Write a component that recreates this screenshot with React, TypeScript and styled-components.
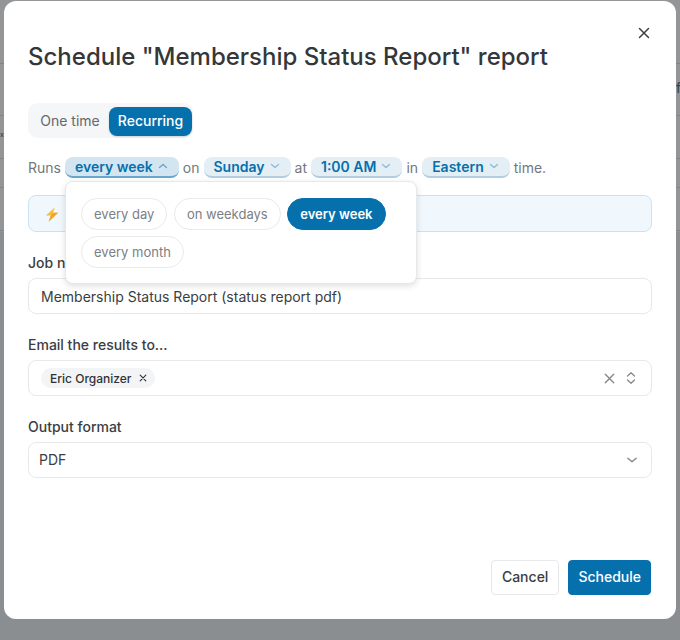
import React from 'react';
import styled, { createGlobalStyle } from 'styled-components';

const GlobalStyle = createGlobalStyle`
  html, body {
    margin: 0;
    padding: 0;
    height: 640px;
    overflow: hidden;
    background: #8a8e91;
    font-family: Inter, "Liberation Sans", sans-serif;
  }
  * { box-sizing: border-box; }
`;

// the page under the modal only shows as faint table rows down both edges
const rowLine = (y: number) =>
  `linear-gradient(#808487, #808487) 0 ${y}px / 100% 1px no-repeat`;

const Backdrop = styled.div`
  height: 640px;
  padding: 1px 4px 21px;
  position: relative;
  overflow: hidden;
  background:
    ${rowLine(63)}, ${rowLine(115)}, ${rowLine(158)}, ${rowLine(187)}, ${rowLine(230)},
    linear-gradient(#939597, #939597) 0 0 / 100% 232px no-repeat,
    #8a8e91;
`;

const PageGlyph = styled.span<{ $left: number; $top: number; $size: number }>`
  position: absolute;
  left: ${p => p.$left}px;
  top: ${p => p.$top}px;
  font-size: ${p => p.$size}px;
  line-height: 16px;
  font-weight: 500;
  color: #3f4448;
`;

const Dialog = styled.div`
  height: 618px;
  background: #fff;
  border-radius: 12px;
  padding: 0 24px 24px;
  display: flex;
  flex-direction: column;
  position: relative;
`;

const Title = styled.h1`
  margin: 39px 0 0;
  height: 34px;
  font-size: 24px;
  line-height: 34px;
  font-weight: 500;
  color: #34373a;
`;

const CloseButton = styled.button`
  position: absolute;
  top: 24px;
  right: 24px;
  width: 16px;
  height: 16px;
  padding: 0;
  border: 0;
  background: none;
  color: #3c4043;
  display: flex;
`;

const Tabs = styled.div`
  margin-top: 29px;
  align-self: flex-start;
  display: flex;
  align-items: center;
  height: 35px;
  width: 165px;
  padding: 2px 1px 0 3px;
  background: #f5f6f7;
  border-radius: 10px;
`;

const Tab = styled.div<{ $active?: boolean }>`
  height: 29px;
  padding-bottom: 2px;
  flex: ${p => (p.$active ? '0 0 83px' : '1')};
  display: flex;
  align-items: center;
  justify-content: center;
  border-radius: 8px;
  font-size: 14px;
  font-weight: ${p => (p.$active ? 500 : 400)};
  color: ${p => (p.$active ? '#fff' : '#63686c')};
  background: ${p => (p.$active ? '#0670ad' : 'transparent')};
  box-shadow: ${p => (p.$active ? '0 1px 2px rgba(0,0,0,.15)' : 'none')};
`;

const RunsRow = styled.div`
  margin-top: 18px;
  height: 22px;
  display: flex;
  align-items: center;
  gap: 4px;
  font-size: 14px;
  color: #73787c;
  position: relative;
`;

const Pill = styled.span<{ $open?: boolean }>`
  height: 21px;
  display: inline-flex;
  align-items: center;
  gap: 4px;
  padding: 0 10px;
  border-radius: 8px;
  font-size: 14px;
  font-weight: 600;
  color: #0670ad;
  background: ${p => (p.$open ? '#d2e5f0' : '#e3eef5')};
  border-bottom: 2px solid ${p => (p.$open ? '#6ba7cb' : '#b0d0e2')};
  svg { color: ${p => (p.$open ? '#6ba3c6' : '#8fbbd6')}; }
`;

const Popover = styled.div`
  position: absolute;
  top: 25px;
  left: 37px;
  width: 352px;
  height: 103px;
  z-index: 2;
  background: #fff;
  border: 1px solid #e6e8ea;
  border-radius: 8px;
  box-shadow: 0 2px 6px rgba(0, 0, 0, .13);
  padding: 16px 15px 0;
  display: flex;
  flex-wrap: wrap;
  align-content: flex-start;
  gap: 6px 6.5px;
`;

const Chip = styled.span<{ $selected?: boolean }>`
  height: 32px;
  display: inline-flex;
  align-items: center;
  padding: 0 12px;
  border-radius: 16px;
  font-size: 13px;
  font-weight: ${p => (p.$selected ? 600 : 400)};
  color: ${p => (p.$selected ? '#fff' : '#7b8084')};
  background: ${p => (p.$selected ? '#0670ad' : '#fff')};
  border: 1px solid ${p => (p.$selected ? '#0670ad' : '#e8eaeb')};
`;

const InfoBox = styled.div`
  margin-top: 17px;
  height: 37px;
  display: flex;
  align-items: center;
  padding: 1px 0 0 16px;
  background: #f0f8fd;
  border: 1px solid #c9e3f1;
  border-radius: 8px;
`;

const Label = styled.div`
  font-size: 14px;
  line-height: 20px;
  font-weight: 500;
  color: #3a3e41;
`;

const FieldGroup = styled.div<{ $top: number }>`
  margin-top: ${p => p.$top}px;
  display: flex;
  flex-direction: column;
  gap: 5px;
`;

const Field = styled.div`
  height: 36px;
  display: flex;
  align-items: center;
  padding: 0 12px;
  background: #fff;
  border: 1px solid #e6e8ea;
  border-radius: 8px;
  font-size: 14px;
  color: #3a3e41;
`;

const SelectField = styled(Field)`
  padding: 0 12px 1px 10px;
  justify-content: space-between;
`;

const TagField = styled(Field)`
  padding: 0 15px 0 12px;
  justify-content: space-between;
`;

const Tag = styled.span`
  height: 20px;
  display: inline-flex;
  align-items: center;
  gap: 7px;
  padding: 0 7px 0 9px;
  background: #f3f4f5;
  border-radius: 10px;
  font-size: 12px;
  font-weight: 500;
  color: #303336;
`;

const FieldIcons = styled.span`
  display: flex;
  align-items: center;
  gap: 9px;
  color: #85898c;
`;

const Footer = styled.div`
  margin-top: auto;
  margin-right: 1px;
  display: flex;
  justify-content: flex-end;
  gap: 9px;
`;

const Button = styled.button<{ $primary?: boolean }>`
  height: 35px;
  padding: 0 ${p => (p.$primary ? 9 : 10)}px 2px;
  font-family: inherit;
  font-size: 14px;
  font-weight: 500;
  border-radius: 4px;
  color: ${p => (p.$primary ? '#fff' : '#3a3e41')};
  background: ${p => (p.$primary ? '#0670ad' : '#fff')};
  border: 1px solid ${p => (p.$primary ? '#0670ad' : '#e6e8ea')};
`;

const Cross = ({ size = 16, width = 1.5 }: { size?: number; width?: number }) => (
  <svg width={size} height={size} viewBox="0 0 16 16" fill="none" stroke="currentColor" strokeWidth={width} strokeLinecap="round">
    <path d="M3.5 3.5l9 9M12.5 3.5l-9 9" />
  </svg>
);

const Chevron = ({ up, size = 12 }: { up?: boolean; size?: number }) => (
  <svg width={size} height={size} viewBox="0 0 12 12" fill="none" stroke="currentColor" strokeWidth="1.3" strokeLinecap="round" strokeLinejoin="round">
    <path d={up ? 'M2.5 7.5L6 4.5l3.5 3' : 'M2.5 4.5L6 7.5l3.5-3'} />
  </svg>
);

const UpDown = () => (
  <svg width="10" height="14" viewBox="0 0 10 14" fill="none" stroke="currentColor" strokeWidth="1.3" strokeLinecap="round" strokeLinejoin="round">
    <path d="M1.5 5L5 1.8 8.5 5M1.5 9L5 12.2 8.5 9" />
  </svg>
);

const Bolt = () => (
  <svg width="14" height="15" viewBox="0 0 14 15">
    <path d="M10 0.3L0.8 8.6h5L3.6 14.7 13.2 5.7H7.8z" fill="#f8bd3a" />
    <path d="M7.8 5.7h5.4L3.6 14.7l2.2-6.1z" fill="#f3a52a" />
  </svg>
);

const App = (): JSX.Element => {
  return (
    <Backdrop>
      <GlobalStyle />
      <PageGlyph $left={0} $top={127} $size={7}>x</PageGlyph>
      <PageGlyph $left={676} $top={80} $size={13}>f</PageGlyph>
      <Dialog>
        <Title>Schedule "Membership Status Report" report</Title>
        <CloseButton><Cross /></CloseButton>
        <Tabs>
          <Tab>One time</Tab>
          <Tab $active>Recurring</Tab>
        </Tabs>
        <RunsRow>
          Runs
          <Pill $open>every week <Chevron up /></Pill>
          on
          <Pill>Sunday <Chevron /></Pill>
          at
          <Pill>1:00 AM <Chevron /></Pill>
          in
          <Pill>Eastern <Chevron /></Pill>
          time.
          <Popover>
            <Chip>every day</Chip>
            <Chip>on weekdays</Chip>
            <Chip $selected>every week</Chip>
            <Chip>every month</Chip>
          </Popover>
        </RunsRow>
        <InfoBox><Bolt /></InfoBox>
        <FieldGroup $top={21}>
          <Label>Job name</Label>
          <Field>Membership Status Report (status report pdf)</Field>
        </FieldGroup>
        <FieldGroup $top={21}>
          <Label>Email the results to...</Label>
          <TagField>
            <Tag>Eric Organizer <Cross size={10} width={1.8} /></Tag>
            <FieldIcons><Cross size={15} /><UpDown /></FieldIcons>
          </TagField>
        </FieldGroup>
        <FieldGroup $top={21}>
          <Label>Output format</Label>
          <SelectField>
            PDF
            <FieldIcons><Chevron size={14} /></FieldIcons>
          </SelectField>
        </FieldGroup>
        <Footer>
          <Button>Cancel</Button>
          <Button $primary>Schedule</Button>
        </Footer>
      </Dialog>
    </Backdrop>
  );
};

export default App;
